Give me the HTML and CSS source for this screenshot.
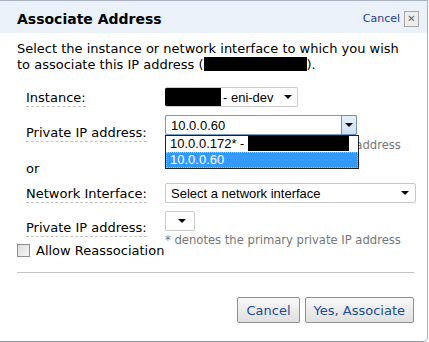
FILE: index.html
```html
<!DOCTYPE html>
<html lang="en">
<head>
    <meta charset="UTF-8">
    <title>Associate Address</title>
    <link rel="stylesheet" href="styles.css">
</head>
<body>
	<div class="dialog">
		<div class="dialog-header">
			<div class="dialog-title">Associate Address</div>
			<div class="dialog-close">
				<a class="close-link">Cancel</a>
				<span class="close-box">&#x2715;</span>
			</div>
		</div>

		<div class="dialog-body">
			<div class="intro">
				Select the instance or network interface to which you wish<br>
				to associate this IP address (<span class="redacted redacted-ip"></span>).
			</div>

			<div class="form-row row-instance">
				<div class="label-cell"><span class="field-label">Instance:</span></div>
				<div class="field-stack">
					<div class="select select-instance">
						<span class="redacted redacted-inst"></span>
						<span class="select-text">- eni-dev</span>
						<span class="arrow"></span>
					</div>
				</div>
			</div>

			<div class="form-row row-ip">
				<div class="label-cell"><span class="field-label">Private IP address:</span></div>
				<div class="field-stack">
					<div class="select select-ip">
						<span class="select-text">10.0.0.60</span>
						<span class="arrow-btn"><span class="arrow"></span></span>
					</div>
					<div class="hint">* denotes the primary private IP address</div>
					<div class="dropdown-list">
						<div class="option">10.0.0.172* - <span class="redacted redacted-opt"></span></div>
						<div class="option selected">10.0.0.60</div>
					</div>
				</div>
			</div>

			<div class="or-text">or</div>

			<div class="form-row row-eni">
				<div class="label-cell"><span class="field-label">Network Interface:</span></div>
				<div class="field-stack">
					<div class="select select-eni">
						<span class="select-text">Select a network interface</span>
						<span class="arrow"></span>
					</div>
				</div>
			</div>

			<div class="form-row row-ip2">
				<div class="label-cell"><span class="field-label">Private IP address:</span></div>
				<div class="field-stack">
					<div class="select select-small">
						<span class="arrow"></span>
					</div>
					<div class="hint">* denotes the primary private IP address</div>
				</div>
			</div>

			<label class="check-row">
				<span class="checkbox"></span>
				Allow Reassociation
			</label>

			<div class="divider"></div>

			<div class="actions">
				<button class="action">Cancel</button>
				<button class="action">Yes, Associate</button>
			</div>
		</div>
	</div>
</body>
</html>
```

FILE: styles.css
```css
body {
	margin: 0;
	background: #ffffff;
	font-family: "DejaVu Sans", Verdana, sans-serif;
	color: #000000;
}

.dialog {
	width: 427px;
	height: 340px;
	border-top: 1px solid #a9b4c0;
	border-right: 1px solid #a9b4c0;
	border-bottom: 1px solid #8c9aa8;
	border-bottom-right-radius: 5px;
	background: #ffffff;
	overflow: hidden;
}

/* header */

.dialog-header {
	height: 32px;
	background: #eaf1f9;
	display: flex;
	align-items: center;
	justify-content: space-between;
	padding: 0 8px 0 17px;
}

.dialog-title {
	font-size: 14px;
	font-weight: bold;
	padding-top: 3px;
}

.dialog-close {
	display: flex;
	align-items: center;
	gap: 4px;
	padding-top: 3px;
}

.close-link {
	font-size: 11px;
	color: #1f3f8f;
}

.close-box {
	width: 13px;
	height: 14px;
	border: 1px solid #a8a8a8;
	background: #eeeeee;
	color: #666666;
	font-size: 10px;
	line-height: 14px;
	text-align: center;
}

/* body */

.dialog-body {
	padding: 8px 12px 0 17px;
}

.intro {
	font-size: 13px;
	line-height: 16px;
}

.redacted {
	display: inline-block;
	background: #000000;
}

.redacted-ip {
	width: 103px;
	height: 14px;
	vertical-align: -2px;
}

.redacted-inst {
	width: 56px;
	height: 20px;
	flex: none;
}

.redacted-opt {
	width: 101px;
	height: 15px;
	vertical-align: -3px;
}

.form-row {
	display: grid;
	grid-template-columns: 148px 1fr;
	align-items: start;
}

.label-cell {
	padding-left: 9px;
	line-height: 16px;
}

.field-label {
	font-size: 13px;
	border-bottom: 1px dashed #c4c4c4;
	padding-bottom: 1px;
}

.field-stack {
	display: flex;
	flex-direction: column;
	align-items: flex-start;
	position: relative;
}

.row-instance {
	margin-top: 14px;
	height: 28px;
}

.row-instance .label-cell,
.row-eni .label-cell {
	padding-top: 2px;
}

.row-ip {
	height: 46px;
}

.row-ip .label-cell {
	padding-top: 9px;
}

.row-eni {
	height: 28px;
}

.row-ip2 {
	height: 32px;
}

.row-ip2 .label-cell {
	padding-top: 8px;
}

/* selects */

.select {
	height: 18px;
	border: 1px solid #cccccc;
	border-radius: 2px;
	background: #ffffff;
	display: flex;
	align-items: center;
	font-family: "Liberation Sans", Arial, sans-serif;
	font-size: 13px;
}

.select-text {
	padding-left: 4px;
	flex: 1;
	white-space: nowrap;
}

.arrow {
	display: inline-block;
	width: 0;
	height: 0;
	border-left: 4px solid transparent;
	border-right: 4px solid transparent;
	border-top: 4px solid #000000;
	margin-right: 6px;
}

.select-instance {
	width: 132px;
	border-left: none;
	overflow: hidden;
}

.select-instance .select-text {
	padding-left: 2px;
}

.select-instance .arrow {
	margin-right: 5px;
}

.select-ip {
	width: 191px;
	border-color: #7a9bc0;
	border-right: none;
}

.select-ip .select-text {
	padding-left: 5px;
}

.arrow-btn {
	width: 16px;
	height: 20px;
	margin: -1px 0;
	background: linear-gradient(#e6f0fa, #cfe0f2);
	border: 1px solid #6c8fb8;
	border-radius: 0 2px 2px 0;
	box-sizing: border-box;
	display: flex;
	align-items: center;
	justify-content: center;
}

.arrow-btn .arrow {
	margin-right: 0;
}

.select-eni {
	width: 249px;
	border-color: #c8c8c8;
}

.select-eni .select-text {
	padding-left: 5px;
}

.select-small {
	width: 28px;
	justify-content: flex-end;
}

.select-small .arrow {
	margin-right: 8px;
}

.hint {
	font-size: 11.6px;
	line-height: 13px;
	color: #777777;
	margin-top: 3px;
	white-space: nowrap;
}

.row-ip .hint {
	margin-top: 4px;
}

.dropdown-list {
	position: absolute;
	top: 20px;
	left: 0;
	width: 192px;
	border: 1px solid #202020;
	background: #ffffff;
	font-family: "Liberation Sans", Arial, sans-serif;
	font-size: 13px;
}

.option {
	height: 16px;
	line-height: 16px;
	padding-left: 4px;
	white-space: nowrap;
}

.option.selected {
	background: #3399ff;
	color: #ffffff;
	outline: 1px dotted #9ccaff;
	outline-offset: -1px;
}

.or-text {
	padding-left: 9px;
	font-size: 13px;
	line-height: 16px;
	height: 22px;
}

/* checkbox and actions */

.check-row {
	display: flex;
	align-items: center;
	gap: 6px;
	font-size: 13px;
	height: 14px;
}

.checkbox {
	width: 11px;
	height: 11px;
	border: 1px solid #8f8f8f;
	background: linear-gradient(135deg, #dcdcdc, #f6f6f6);
}

.divider {
	height: 1px;
	background: #c3c3c3;
	margin-top: 15px;
	margin-right: 1px;
}

.actions {
	display: flex;
	justify-content: flex-end;
	gap: 5px;
	margin-top: 24px;
	padding-right: 1px;
}

.action {
	height: 26px;
	padding: 0 8px;
	border: 1px solid #8f8f8f;
	border-radius: 2px;
	background: linear-gradient(#f8f8f8, #e0e0e0);
	color: #1e4b96;
	font-family: "DejaVu Sans", Verdana, sans-serif;
	font-size: 13px;
}
```
